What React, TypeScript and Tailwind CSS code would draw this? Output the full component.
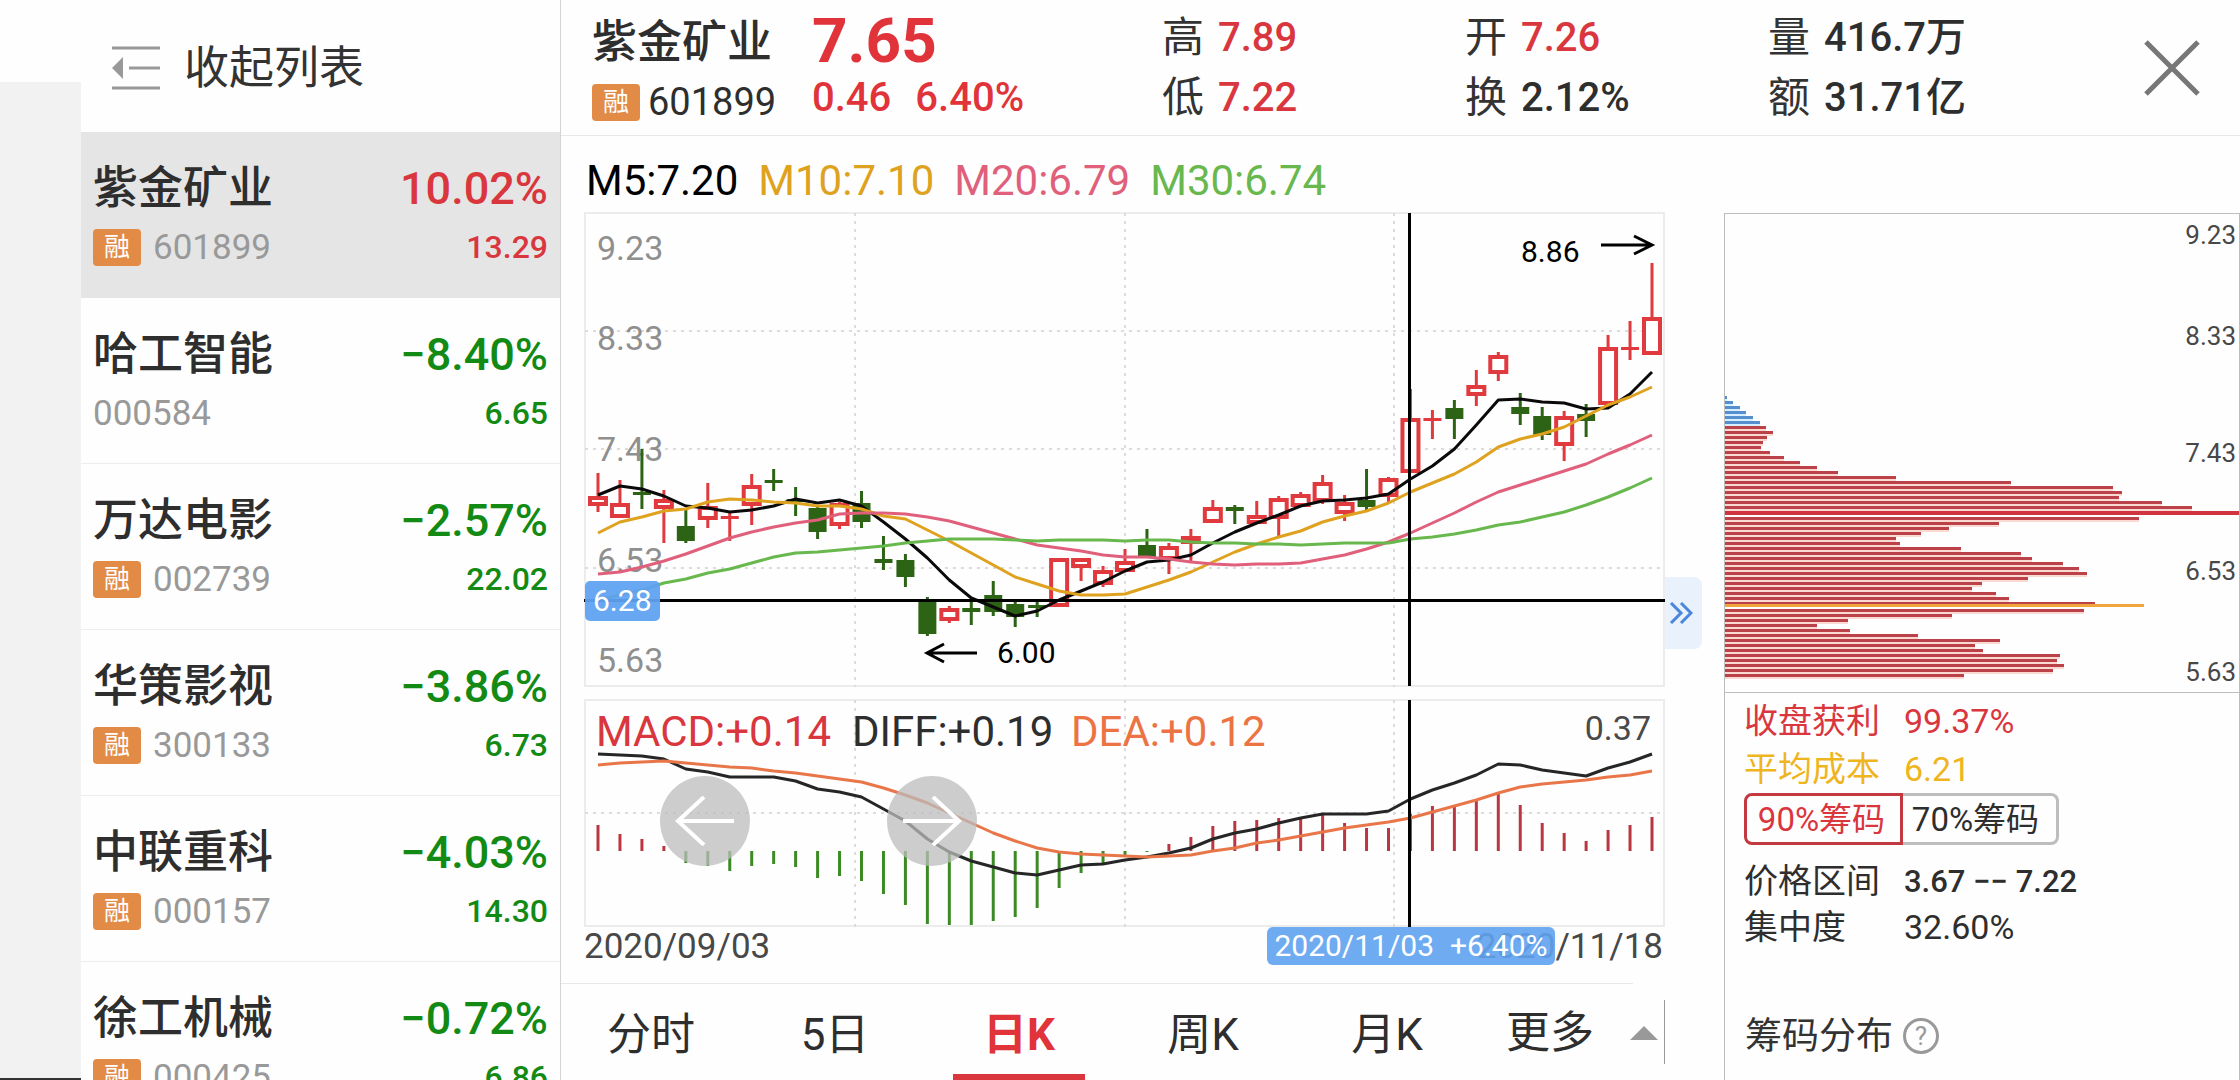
import React from "react";

type Stock = { name: string; code: string; pct: string; price: string; margin: boolean; up?: boolean };

const STOCKS: Stock[] = [
  { name: "紫金矿业", code: "601899", pct: "10.02%", price: "13.29", margin: true, up: true },
  { name: "哈工智能", code: "000584", pct: "−8.40%", price: "6.65", margin: false },
  { name: "万达电影", code: "002739", pct: "−2.57%", price: "22.02", margin: true },
  { name: "华策影视", code: "300133", pct: "−3.86%", price: "6.73", margin: true },
  { name: "中联重科", code: "000157", pct: "−4.03%", price: "14.30", margin: true },
  { name: "徐工机械", code: "000425", pct: "−0.72%", price: "6.86", margin: true },
];

const RED = "#e0393e";
const GREEN = "#2d6314";

// Each candle: direction, high, body top, body bottom, low (chart units)
const CANDLES: [string, number, number, number, number][] = [
  ["r", 261, 285, 293, 300], ["r", 268, 292, 305, 305], ["g", 237, 280, 282, 297], ["r", 278, 288, 296, 331],
  ["g", 298, 314, 329, 331], ["r", 271, 295, 307, 316], ["r", 301, 304, 306, 329], ["r", 262, 274, 293, 313],
  ["g", 257, 268, 270, 279], ["g", 275, 287, 289, 304], ["g", 295, 296, 320, 327], ["r", 290, 292, 313, 317],
  ["g", 279, 291, 310, 316], ["g", 324, 347, 350, 358], ["g", 342, 348, 365, 375], ["g", 385, 390, 422, 424],
  ["r", 394, 397, 408, 411], ["g", 389, 396, 399, 413], ["g", 369, 383, 400, 404], ["g", 388, 392, 405, 415],
  ["g", 390, 393, 395, 405], ["r", 347, 347, 394, 394], ["r", 346, 347, 355, 369], ["r", 354, 359, 372, 375],
  ["r", 337, 350, 359, 359], ["g", 317, 333, 346, 346], ["r", 331, 335, 347, 362], ["r", 317, 325, 331, 350],
  ["r", 288, 296, 310, 310], ["g", 293, 295, 299, 312], ["r", 289, 304, 311, 312], ["r", 284, 287, 306, 325],
  ["r", 280, 283, 294, 294], ["r", 263, 271, 289, 292], ["r", 283, 291, 301, 309], ["g", 257, 288, 295, 300],
  ["r", 265, 267, 284, 291], ["r", 177, 207, 260, 260], ["r", 198, 206, 208, 227], ["g", 188, 196, 207, 227],
  ["r", 158, 174, 183, 194], ["r", 140, 144, 161, 169], ["g", 181, 195, 202, 213], ["g", 195, 204, 223, 228],
  ["r", 199, 205, 233, 249], ["g", 192, 202, 209, 225], ["r", 123, 136, 192, 192], ["r", 109, 135, 137, 148],
  ["r", 51, 106, 142, 143],
];

const M5 = [283,274,277,284,294,296,300,298,294,287,291,288,294,310,327,346,368,386,395,404,399,388,379,370,359,350,348,343,331,320,311,303,294,289,288,286,282,267,254,237,213,188,187,190,191,197,196,182,160];
const M10 = [321,310,305,299,297,290,287,288,290,291,294,294,297,304,307,318,329,341,353,365,372,379,383,383,382,375,368,360,350,340,332,325,319,310,304,299,291,280,271,262,250,235,227,222,215,204,193,185,175];
const M20 = [362,360,355,349,342,334,326,320,315,311,308,302,301,301,302,305,309,315,321,327,333,336,339,343,345,345,347,350,352,353,352,352,351,347,343,337,330,321,311,301,290,280,273,266,259,252,242,233,223];
const M30 = [388,383,378,371,367,361,357,351,345,341,340,338,336,334,331,329,327,327,327,328,329,328,328,328,329,328,328,330,331,331,332,332,333,332,331,331,331,327,325,322,318,313,310,305,300,293,285,276,266];

const MACD = [26,17,12,5,-12,-15,-20,-15,-13,-16,-27,-25,-30,-43,-54,-73,-74,-74,-70,-66,-57,-37,-22,-13,-6,-1,7,14,25,30,31,33,33,36,28,23,23,37,45,46,51,58,46,28,18,10,21,26,34];
const DIFF = [55,56,57,60,70,73,78,78,78,82,90,93,98,110,122,140,153,162,168,174,176,171,166,165,161,158,154,149,140,134,130,124,119,115,115,115,112,100,91,84,76,65,66,71,74,77,69,63,55];
const DEA = [66,64,63,62,64,66,68,69,72,74,77,80,83,89,96,104,114,124,134,142,149,153,155,156,157,158,157,156,152,149,144,141,137,133,129,126,123,119,113,107,101,94,88,85,83,81,78,76,72];

const CHIPS_TOP = [2,8,15,21,28,35,41,48,42,38,36,45,59,75,92,113,171,286,388,397,394,437,467];
const CHIPS_MID = [414,274,224,196,171,175,236,296,307,338,354,362,303,257,247,271,284,370];
const CHIPS_LOW = [359,227,123,92,125,193,275,250,258,335,332,339,328,239];

const cx = (i: number) => 14 + (i * 1054) / 48;
const line = (ys: number[]) => ys.map((y, i) => `${cx(i).toFixed(1)},${y}`).join(" ");

function Badge() {
  return (
    <span className="flex h-[37px] w-12 shrink-0 items-center justify-center rounded bg-[#e18b46] text-[26px] leading-none text-white">
      融
    </span>
  );
}

function Grid({ height, rows }: { height: number; rows: number[] }) {
  return (
    <g stroke="#dcdcdc" strokeWidth="2">
      <rect x="1" y="1" width="1079" height={height - 2} fill="none" stroke="#ececec" />
      {rows.map((y) => (
        <line key={y} x1="1" x2="1080" y1={y} y2={y} strokeDasharray="3 5" />
      ))}
      {[271, 541, 810].map((x) => (
        <line key={x} x1={x} x2={x} y1="1" y2={height} strokeDasharray="3 5" />
      ))}
    </g>
  );
}

function Sidebar() {
  return (
    <aside className="flex w-[480px] shrink-0 flex-col border-r border-[#d4d4d4] bg-[#fefefe]">
      <button className="flex h-[132px] shrink-0 items-center gap-6 pt-1 pl-[31px] text-left text-[45px] leading-none text-[#333]">
        <svg width="48" height="44" viewBox="0 0 48 44" className="text-[#999]" aria-hidden="true">
          <path d="M0 2H48M17 22H48M0 42H48" stroke="currentColor" strokeWidth="3" />
          <path d="M0 22L11 11V33Z" fill="currentColor" />
        </svg>
        收起列表
      </button>
      <ul>
        {STOCKS.map((s, i) => (
          <li key={s.code}>
            <button
              className={
                "flex h-[166px] w-full flex-col gap-3 pt-7 pl-3 pr-3 text-left " +
                (i === 0 ? "bg-[#e5e5e5]" : "border-b border-[#ededed]")
              }
            >
              <span className="flex h-[56px] w-full items-center justify-between">
                <span className="text-[45px] font-medium leading-none text-[#2e2e2e]">{s.name}</span>
                <span className={"text-[45px] font-medium leading-none " + (s.up ? "text-[#d9363e]" : "text-[#128a14]")}>
                  {s.pct}
                </span>
              </span>
              <span className="flex h-[38px] w-full items-center gap-3">
                {s.margin && <Badge />}
                <span className="text-[35px] leading-none text-[#999]">{s.code}</span>
                <span
                  className={"ml-auto text-[32px] font-medium leading-none " + (s.up ? "text-[#d9363e]" : "text-[#128a14]")}
                >
                  {s.price}
                </span>
              </span>
            </button>
          </li>
        ))}
      </ul>
    </aside>
  );
}

function Quote({ label, value, up }: { label: string; value: string; up?: boolean }) {
  return (
    <div className="flex h-[60px] items-center gap-3.5 leading-none">
      <dt className="text-[42px] text-[#333]">{label}</dt>
      <dd className={"text-[40px] font-medium " + (up ? "text-[#d9363e]" : "text-[#2e2e2e]")}>{value}</dd>
    </div>
  );
}

function Header() {
  return (
    <header className="flex h-[136px] shrink-0 border-b border-[#e8e8e8] pl-[31px] pr-10">
      <div className="flex w-[220px] flex-col pt-3 text-[#2e2e2e]">
        <h1 className="flex h-[60px] items-center text-[45px] font-medium leading-none">紫金矿业</h1>
        <div className="flex h-[60px] items-center gap-2">
          <Badge />
          <span className="text-[38px] leading-none">601899</span>
        </div>
      </div>
      <div className="flex w-[350px] flex-col pt-3 text-[#e0333a]">
        <div className="flex h-[58px] items-center text-[62px] font-bold leading-none">7.65</div>
        <div className="flex h-[56px] items-center gap-6 text-[40px] font-medium leading-none">
          <span>0.46</span>
          <span>6.40%</span>
        </div>
      </div>
      <dl className="grid flex-1 grid-cols-[303fr_303fr_376fr] pt-2">
        <div>
          <Quote label="高" value="7.89" up />
          <Quote label="低" value="7.22" up />
        </div>
        <div>
          <Quote label="开" value="7.26" up />
          <Quote label="换" value="2.12%" />
        </div>
        <div>
          <Quote label="量" value="416.7万" />
          <Quote label="额" value="31.71亿" />
        </div>
      </dl>
      <button aria-label="关闭" className="flex items-center">
        <svg width="56" height="56" viewBox="0 0 56 56" aria-hidden="true">
          <path d="M2 2L54 54M54 2L2 54" stroke="#777" strokeWidth="5" />
        </svg>
      </button>
    </header>
  );
}

function PriceChart() {
  return (
    <svg viewBox="0 0 1081 475" className="block w-full" role="img" aria-label="日K线图">
      <Grid height={475} rows={[119, 237, 356]} />
      <g className="text-[34px]" fill="#8f8f8f">
        <text x="13" y="48">9.23</text>
        <text x="13" y="138">8.33</text>
        <text x="13" y="249">7.43</text>
        <text x="13" y="360">6.53</text>
        <text x="13" y="460">5.63</text>
      </g>
      {CANDLES.map(([dir, high, top, bottom, low], i) => {
        const x = cx(i);
        const color = dir === "r" ? RED : GREEN;
        const h = bottom - top;
        return (
          <g key={i} stroke={color} strokeWidth="3">
            <line x1={x} x2={x} y1={high} y2={top} />
            <line x1={x} x2={x} y1={bottom} y2={low} />
            {h < 4 ? (
              <rect x={x - 9} y={top} width="18" height={h + 1} fill={color} stroke="none" />
            ) : (
              <rect x={x - 8} y={top + 1} width="16" height={h - 2} fill={dir === "r" ? "#fff" : color} strokeWidth={dir === "r" ? 4 : 2} />
            )}
          </g>
        );
      })}
      <g fill="none" strokeWidth="3" strokeLinejoin="round">
        <polyline points={line(M5)} stroke="#0a0a0a" />
        <polyline points={line(M10)} stroke="#dfa21f" />
        <polyline points={line(M20)} stroke="#e0607c" />
        <polyline points={line(M30)} stroke="#68b84e" />
      </g>
      <rect x="0" y="387" width="1081" height="3" />
      <rect x="824" y="1" width="3" height="473" />
      <g stroke="#000" strokeWidth="3" fill="none">
        <path d="M393 441H343M360 432L343 441L360 450" />
        <path d="M1017 33H1068M1050 24L1068 33L1050 42" />
      </g>
      <g className="text-[30px]" fill="#000">
        <text x="413" y="451">6.00</text>
        <text x="937" y="50">8.86</text>
      </g>
      <rect x="1" y="369" width="75" height="40" rx="5" fill="#5fa2f0" fillOpacity="0.94" />
      <text x="9" y="399" className="text-[30px]" fill="#fff">6.28</text>
    </svg>
  );
}

function MacdChart() {
  return (
    <div className="relative mt-3">
      <svg viewBox="0 0 1081 228" className="block w-full" role="img" aria-label="MACD">
        <Grid height={228} rows={[114]} />
        <g className="text-[42px]">
          <text x="12" y="47" fill="#d9363e">MACD:+0.14</text>
          <text x="268" y="47" fill="#2e2e2e">DIFF:+0.19</text>
          <text x="487" y="47" fill="#ec7444">DEA:+0.12</text>
        </g>
        <text x="1067" y="41" textAnchor="end" className="text-[34px]" fill="#4a4a4a">0.37</text>
        {MACD.map((v, i) => (
          <line key={i} x1={cx(i)} x2={cx(i)} y1="152" y2={152 - v} stroke={v > 0 ? "#bb3640" : "#3c8a24"} strokeWidth="3" />
        ))}
        <g fill="none" strokeWidth="3" strokeLinejoin="round">
          <polyline points={line(DIFF)} stroke="#262626" />
          <polyline points={line(DEA)} stroke="#e87648" />
        </g>
        <rect x="824" y="1" width="3" height="227" />
      </svg>
      <button aria-label="上一日" className="absolute left-[7%] top-[77px] flex size-[90px] items-center justify-center rounded-full bg-[#bcbcbc]/75">
        <svg width="60" height="50" viewBox="0 0 60 50" fill="none" stroke="#fff" strokeWidth="4" aria-hidden="true">
          <path d="M59 25H3M29 1L3 25L29 49" />
        </svg>
      </button>
      <button aria-label="下一日" className="absolute left-[28%] top-[77px] flex size-[90px] items-center justify-center rounded-full bg-[#bcbcbc]/75">
        <svg width="60" height="50" viewBox="0 0 60 50" fill="none" stroke="#fff" strokeWidth="4" aria-hidden="true">
          <path d="M1 25H57M31 1L57 25L31 49" />
        </svg>
      </button>
    </div>
  );
}

function Tabs() {
  const tabs = ["分时", "5日", "日K", "周K", "月K"];
  return (
    <nav className="mt-4 flex flex-1 flex-col">
      <div className="mr-8 border-t border-[#e8e8e8]" />
      <div className="grid flex-1 grid-cols-6 text-[44px] leading-none text-[#2e2e2e]">
        {tabs.map((t) => (
          <button key={t} className={"relative flex items-center justify-center pt-1.5 pr-1 " + (t === "日K" ? "font-bold text-[#e0333a]" : "")}>
            {t}
            {t === "日K" && <span className="absolute bottom-0 h-1.5 w-[132px] bg-[#d9363e]" />}
          </button>
        ))}
        <button className="my-4 flex items-center justify-end gap-9 border-r border-[#999] pt-0.5 pr-1.5">
          更多
          <svg width="28" height="14" viewBox="0 0 28 14" aria-hidden="true">
            <path d="M14 0L28 14H0Z" fill="#999" />
          </svg>
        </button>
      </div>
    </nav>
  );
}

function ChipBars({ widths, start, blue = 0 }: { widths: number[]; start: number; blue?: number }) {
  return (
    <>
      {widths.map((w, i) => (
        <g key={i}>
          <rect x="0" y={start + 5 * i} width={w} height="5" fill={i < blue ? "#d8efff" : "#fbd9d3"} />
          <rect x="0" y={start + 5 * i} width={w} height="3" fill={i < blue ? "#568fd0" : "#bb4248"} />
        </g>
      ))}
    </>
  );
}

function ChipPanel() {
  return (
    <section className="flex w-[516px] shrink-0 flex-col pt-[77px]">
      <div className="flex flex-1 flex-col border-x border-t border-[#bdbdbd]">
        <div className="border-b border-[#bdbdbd]">
          <svg viewBox="0 0 514 478" className="block w-full" role="img" aria-label="筹码分布图">
            <g className="text-[26px]" fill="#484848" textAnchor="end">
              <text x="511" y="30">9.23</text>
              <text x="511" y="131">8.33</text>
              <text x="511" y="248">7.43</text>
              <text x="511" y="366">6.53</text>
              <text x="511" y="467">5.63</text>
            </g>
            <ChipBars widths={CHIPS_TOP} start={182} blue={6} />
            <rect x="0" y="297" width="514" height="4" fill="#d0343f" />
            <ChipBars widths={CHIPS_MID} start={303} />
            <rect x="0" y="390" width="419" height="3" fill="#f0a63c" />
            <ChipBars widths={CHIPS_LOW} start={395} />
          </svg>
        </div>
        <div className="flex flex-col pl-[19px] text-[34px] leading-none text-[#2e2e2e]">
          <dl className="pt-1">
            <div className="flex h-12 items-center text-[#d9363e]">
              <dt className="w-40">收盘获利</dt>
              <dd>99.37%</dd>
            </div>
            <div className="flex h-12 items-center text-[#eeb51e]">
              <dt className="w-40">平均成本</dt>
              <dd>6.21</dd>
            </div>
          </dl>
          <div className="flex h-[52px] text-[33px]">
            <button className="w-[159px] rounded-l-lg border-3 border-[#c23a40] pr-1 text-[#d9363e]">90%筹码</button>
            <button className="w-[156px] rounded-r-lg border-3 border-l-0 border-[#bdbdbd] pr-2">70%筹码</button>
          </div>
          <dl className="pt-3">
            <div className="flex h-12 items-center">
              <dt className="w-40">价格区间</dt>
              <dd className="text-[31px] font-medium">3.67 −− 7.22</dd>
            </div>
            <div className="flex h-11 items-center">
              <dt className="w-40">集中度</dt>
              <dd>32.60%</dd>
            </div>
          </dl>
        </div>
        <div className="mt-auto flex h-[88px] items-center gap-2.5 pl-5 text-[37px] leading-none text-[#333]">
          筹码分布
          <button aria-label="帮助" className="flex size-9 items-center justify-center rounded-full border-3 border-[#999] text-[26px] leading-none text-[#999]">
            ?
          </button>
        </div>
      </div>
    </section>
  );
}

export default function App() {
  return (
    <div className="flex h-screen overflow-hidden bg-[#fefefe] font-[Roboto,'Noto_Sans_CJK_SC',sans-serif]">
      <div className="flex w-[81px] shrink-0 pt-[82px]">
        <div className="flex-1 border-b-2 border-[#333] bg-[#f2f2f2]" />
      </div>
      <Sidebar />
      <main className="flex min-w-0 flex-1 flex-col">
        <Header />
        <div className="flex min-h-0 flex-1">
          <section className="flex min-w-0 flex-1 flex-col">
            <div className="pl-[23px]">
              <div className="flex h-[76px] items-center gap-5 pt-3.5 pl-0.5 text-[42px] leading-none">
                <span className="text-black">M5:7.20</span>
                <span className="text-[#dfa21f]">M10:7.10</span>
                <span className="text-[#e0607c]">M20:6.79</span>
                <span className="text-[#68b84e]">M30:6.74</span>
              </div>
              <PriceChart />
              <MacdChart />
              <div className="relative flex h-10 items-center justify-between pb-0.5 pr-0.5 text-[35px] leading-none text-[#484848]">
                <span>2020/09/03</span>
                <span>2020/11/18</span>
                <span className="absolute right-[110px] top-0 flex h-[38px] w-[288px] items-center justify-center gap-4 rounded-md bg-[#5fa2f0]/90 text-[30px] text-white">
                  <span>2020/11/03</span>
                  <span>+6.40%</span>
                </span>
              </div>
            </div>
            <Tabs />
          </section>
          <div className="w-[59px] shrink-0 pt-[441px]">
            <button aria-label="展开" className="flex h-[72px] w-[37px] items-center justify-start rounded-r-lg bg-[#e9f1fd] pl-1">
              <svg width="24" height="22" viewBox="0 0 24 22" fill="none" stroke="#4a86dc" strokeWidth="3" aria-hidden="true">
                <path d="M2 1L12 11L2 21M12 1L22 11L12 21" />
              </svg>
            </button>
          </div>
          <ChipPanel />
        </div>
      </main>
    </div>
  );
}
